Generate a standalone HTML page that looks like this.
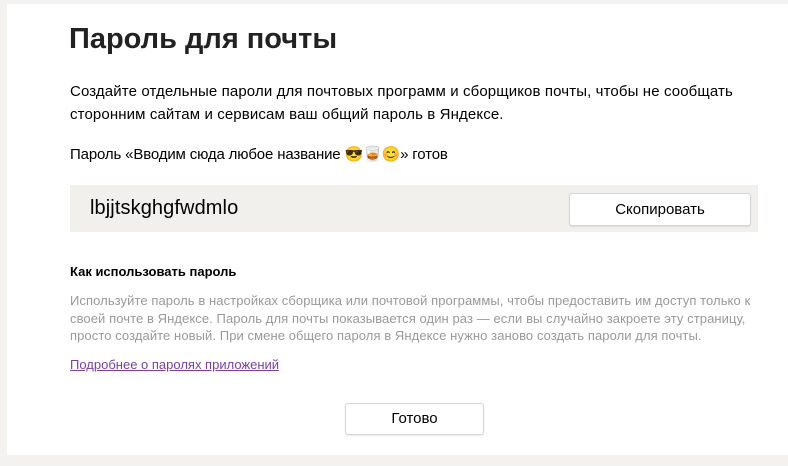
<!DOCTYPE html>
<html><head><meta charset="utf-8"><style>
body{margin:0;width:788px;height:466px;background:#f3f2f0;font-family:"Liberation Sans","Noto Sans CJK SC",sans-serif;overflow:hidden;position:relative}
.card{position:absolute;left:7px;top:4px;width:781px;height:451px;background:#fff}
.a{position:absolute;white-space:nowrap}
.btn{position:absolute;background:#fff;border:1px solid #d4d4d4;border-radius:3px;box-shadow:0 1px 1px rgba(0,0,0,.08);text-align:center;color:#000;font-size:15px}
</style></head><body>
<div class="card"></div>
<div class="a" style="left:69px;top:23px;font-size:29px;font-weight:bold;color:#222;letter-spacing:0">Пароль для почты</div>
<div class="a" style="left:70px;top:80px;font-size:15px;line-height:23px;color:#000;letter-spacing:0.12px">Создайте отдельные пароли для почтовых программ и сборщиков почты, чтобы не сообщать<br>сторонним сайтам и сервисам ваш общий пароль в Яндексе.</div>
<div class="a" style="left:70px;top:145px;font-size:15px;color:#000;letter-spacing:-0.15px">Пароль «Вводим сюда любое название 😎🥃😊» готов</div>
<div style="position:absolute;left:70px;top:185px;width:688px;height:47px;background:#f2f0ec"></div>
<div class="a" style="left:90px;top:197px;font-size:20px;color:#000;letter-spacing:0.1px">lbjjtskghgfwdmlo</div>
<div class="btn" style="left:569px;top:193px;width:180px;height:31px;line-height:31px">Скопировать</div>
<div class="a" style="left:70px;top:264px;font-size:13px;font-weight:bold;color:#000">Как использовать пароль</div>
<div class="a" style="left:70px;top:292px;font-size:13px;line-height:17.5px;color:#999;letter-spacing:0.08px">Используйте пароль в настройках сборщика или почтовой программы, чтобы предоставить им доступ только к<br>своей почте в Яндексе. Пароль для почты показывается один раз — если вы случайно закроете эту страницу,<br>просто создайте новый. При смене общего пароля в Яндексе нужно заново создать пароли для почты.</div>
<div class="a" style="left:70px;top:357px;font-size:13px;color:#7b3fa0;text-decoration:underline">Подробнее о паролях приложений</div>
<div class="btn" style="left:345px;top:403px;width:137px;height:30px;line-height:30px">Готово</div>
</body></html>
